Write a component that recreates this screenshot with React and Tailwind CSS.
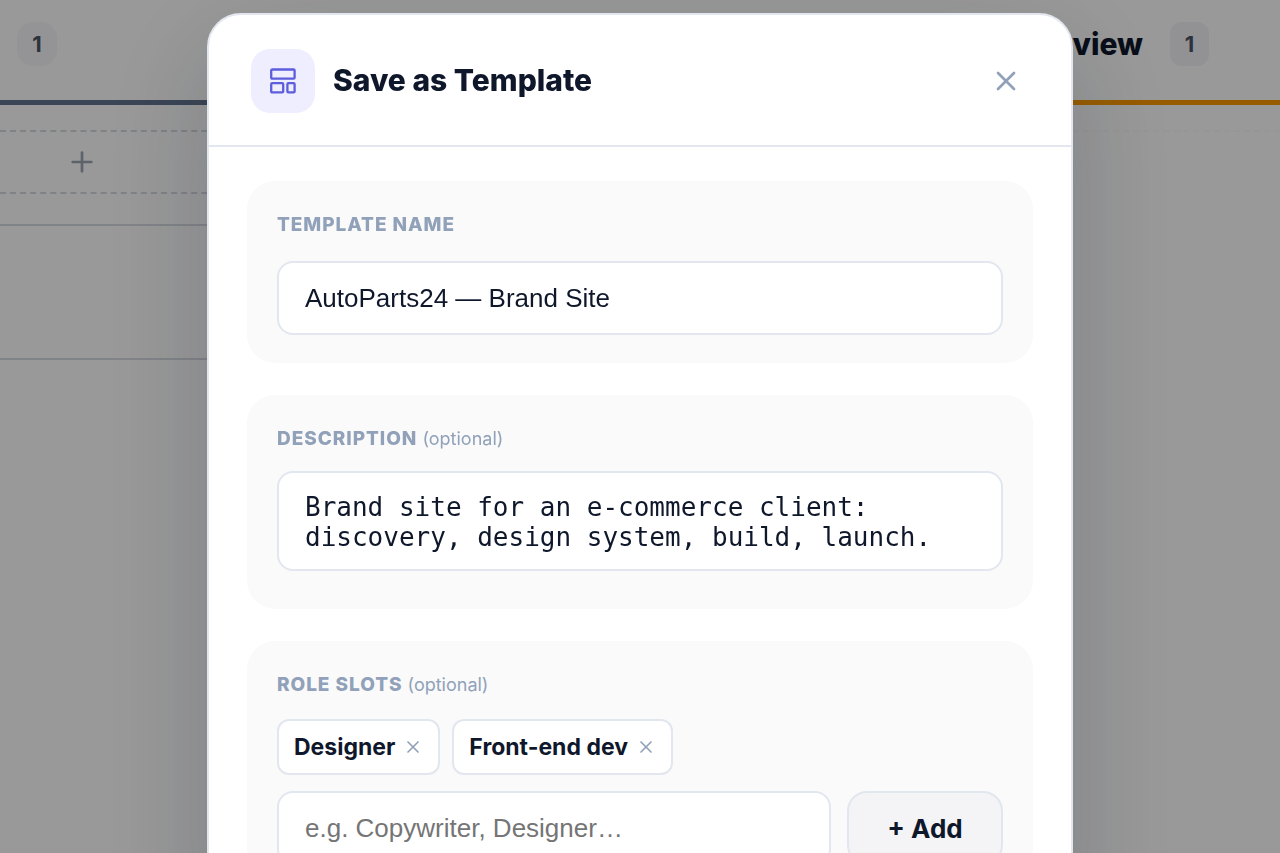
import React, { useState } from 'react';
import { Plus, X } from 'lucide-react';

const fieldClass =
  'block w-full rounded-2xl border-2 border-[#e2e6ee] bg-white px-[26px] text-[26px] text-slate-900 outline-none';

// Board behind the dialog
const Board = () => (
  <div className="flex h-screen overflow-hidden bg-white font-['Inter',sans-serif]">
    <section className="flex-1">
      <header className="flex h-[105px] items-start border-b-[5px] border-slate-500 pt-[22px] pl-[17px]">
        <span className="flex h-11 w-10 items-center justify-center rounded-2xl bg-[#f7f7fa] text-[22px] font-bold text-gray-600">
          1
        </span>
      </header>
      <button
        type="button"
        aria-label="Add task"
        className="mt-[25px] flex h-16 w-full items-center border-y-2 border-dashed border-[#d5dae0] pl-[66px] text-[#9ca3b2]"
      >
        <Plus size={32} strokeWidth={2} />
      </button>
      <div className="mt-[30px] h-[136px] border-y-2 border-[#d8dce2]" />
    </section>

    <section className="flex-1">
      <header className="flex h-[105px] items-start justify-end gap-[27px] border-b-[5px] border-amber-500 pt-[22px] pr-[71px]">
        <h2 className="text-[30px] leading-[44px] font-extrabold text-slate-900">Review</h2>
        <span className="flex h-11 w-[39px] items-center justify-center rounded-xl bg-[#f4f4f8] text-[22px] font-bold text-gray-600">
          1
        </span>
      </header>
      <div className="mt-[25px] border-t-2 border-dashed border-zinc-50" />
    </section>
  </div>
);

const Card = ({ children }) => (
  <section className="rounded-[28px] bg-[#fafafa] px-[30px] py-7">{children}</section>
);

const FieldLabel = ({ htmlFor, optional, children }) => (
  <label htmlFor={htmlFor} className="block text-[19px] leading-8 text-slate-400">
    <span className="font-extrabold tracking-wider uppercase">{children}</span>
    {optional && <span className="text-[18px]"> (optional)</span>}
  </label>
);

// One wide block over two narrower ones
const TemplateIcon = () => (
  <svg width="26" height="26" viewBox="0 0 26 26" fill="none" stroke="currentColor" strokeWidth="2.3" aria-hidden="true">
    <rect x="1.2" y="1.5" width="23.4" height="9.2" rx="1" />
    <rect x="1.2" y="15.2" width="12" height="9.2" rx="1" />
    <rect x="17.4" y="15.2" width="7.2" height="9.2" rx="1" />
  </svg>
);

const App = () => {
  const [name, setName] = useState('AutoParts24 — Brand Site');
  const [description, setDescription] = useState(
    'Brand site for an e-commerce client: discovery, design system, build, launch.'
  );
  const [roles, setRoles] = useState(['Designer', 'Front-end dev']);
  const [newRole, setNewRole] = useState('');

  const addRole = () => {
    const role = newRole.trim();
    if (!role || roles.includes(role)) return;
    setRoles([...roles, role]);
    setNewRole('');
  };

  return (
    <>
      <Board />

      <div className="fixed inset-0 flex items-start justify-center overflow-hidden bg-black/40 pt-[13px] font-['Inter',sans-serif]">
        <div
          role="dialog"
          aria-labelledby="dialog-title"
          className="w-full max-w-[866px] rounded-[34px] border-2 border-[#e2e6ee] bg-white shadow-[0_38px_112px_rgba(15,23,42,0.2)]"
        >
          {/* Header */}
          <header className="flex items-center gap-[18px] border-b-2 border-[#e2e6ee] pt-[34px] pr-[41px] pb-8 pl-[42px]">
            <div className="flex size-16 items-center justify-center rounded-[19px] bg-[#eeeeff] text-[#5d5ddd]">
              <TemplateIcon />
            </div>
            <h1 id="dialog-title" className="flex-1 pb-0.5 text-[30px] leading-10 font-extrabold text-slate-900">
              Save as Template
            </h1>
            <button type="button" aria-label="Close" className="p-2 text-slate-400">
              <X size={32} strokeWidth={2} />
            </button>
          </header>

          {/* Body */}
          <div className="flex flex-col gap-8 px-[38px] pt-[34px] pb-10">
            <Card>
              <FieldLabel htmlFor="name">Template name</FieldLabel>
              <input
                id="name"
                value={name}
                onChange={(e) => setName(e.target.value)}
                className={`${fieldClass} mt-5 h-[74px] font-['Liberation_Sans',sans-serif]`}
              />
            </Card>

            <Card>
              <FieldLabel htmlFor="description" optional>
                Description
              </FieldLabel>
              <textarea
                id="description"
                rows={2}
                value={description}
                onChange={(e) => setDescription(e.target.value)}
                className={`${fieldClass} mt-4 mb-[10px] h-[100px] resize-none overflow-hidden py-[19px] font-['DejaVu_Sans_Mono',monospace] leading-[30px]`}
              />
            </Card>

            <Card>
              <FieldLabel htmlFor="role" optional>
                Role slots
              </FieldLabel>
              <div className="mt-[18px] flex flex-wrap gap-3">
                {roles.map((role) => (
                  <span
                    key={role}
                    className="flex h-14 items-center gap-2 rounded-xl border-2 border-[#e2e6ee] bg-white px-[15px] text-[23px] font-bold text-slate-900"
                  >
                    {role}
                    <button
                      type="button"
                      aria-label={`Remove ${role}`}
                      onClick={() => setRoles(roles.filter((r) => r !== role))}
                      className="text-slate-400"
                    >
                      <X size={20} strokeWidth={2} />
                    </button>
                  </span>
                ))}
              </div>
              <div className="mt-4 flex gap-4">
                <input
                  id="role"
                  value={newRole}
                  onChange={(e) => setNewRole(e.target.value)}
                  placeholder="e.g. Copywriter, Designer…"
                  className={`${fieldClass} h-[74px] min-w-0 flex-1 font-['Liberation_Sans',sans-serif] placeholder:text-[#757575]`}
                />
                <button
                  type="button"
                  onClick={addRole}
                  className="h-[74px] w-[156px] rounded-[20px] border-2 border-[#e2e6ee] bg-[#f4f4f6] text-[26px] font-bold text-slate-900"
                >
                  + Add
                </button>
              </div>
            </Card>
          </div>
        </div>
      </div>
    </>
  );
};

export default App;
